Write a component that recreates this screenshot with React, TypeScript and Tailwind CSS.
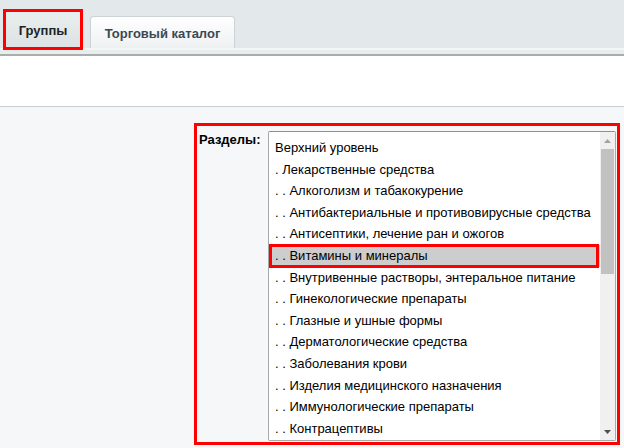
import React from 'react';

const sections = [
  'Верхний уровень',
  '. Лекарственные средства',
  '. . Алкоголизм и табакокурение',
  '. . Антибактериальные и противовирусные средства',
  '. . Антисептики, лечение ран и ожогов',
  '. . Витамины и минералы',
  '. . Внутривенные растворы, энтеральное питание',
  '. . Гинекологические препараты',
  '. . Глазные и ушные формы',
  '. . Дерматологические средства',
  '. . Заболевания крови',
  '. . Изделия медицинского назначения',
  '. . Иммунологические препараты',
  '. . Контрацептивы',
];

const SELECTED = 5;

const App: React.FC = () => {
  return (
    <div className="min-h-[448px] w-[624px] overflow-hidden bg-[#f5f7f8] font-['Liberation_Sans',Arial,sans-serif] text-[13px] text-black">
      {/* tabs */}
      <div className="flex h-[48px] items-start bg-[#e3e9ea] pl-[3px]">
        <div className="relative z-10 mt-[9px] flex h-[41px] w-[80px] items-center justify-center border-[3px] border-[#ff0000] bg-gradient-to-b from-[#e9eeee] to-[#dde3e4] pt-[2px] font-bold text-[#1c2326]">
          Группы
        </div>
        <div className="ml-[7px] mt-[16px] flex h-[32px] w-[145px] items-center justify-center rounded-t-[4px] border border-b-0 border-[#ccd3d4] bg-gradient-to-b from-white to-[#eef1f2] pt-[3px] font-bold text-[#3c4850]">
          Торговый каталог
        </div>
      </div>
      <div className="h-[8px] border-t-2 border-b-2 border-t-[#f4f6f6] border-b-[#a6aeae] bg-[#e7ecec]" />

      <div className="h-[51px] border-b border-[#c6cece] bg-white" />

      {/* form */}
      <div className="ml-[194px] mt-[16px] flex h-[322px] w-[426px] border-[3px] border-[#ff0000]">
        <div className="w-[71px] pl-[2px] pt-[6px] font-bold leading-[15px]">Разделы:</div>
        <div className="mt-[5px] flex h-[310px] w-[348px] overflow-hidden rounded-[2px] border border-[#a9a9a9] border-t-[#8f8f8f] bg-white">
          <ul className="flex-1 pt-[5px]">
            {sections.map((s, i) => (
              <li
                key={s}
                className={
                  i === SELECTED
                    ? 'relative h-[21.6px] whitespace-nowrap bg-[#cdcdcd] pl-[6px] leading-[21.6px]'
                    : 'h-[21.6px] whitespace-nowrap pl-[6px] leading-[21.6px]'
                }
              >
                {s}
                {i === SELECTED && (
                  <span className="absolute -top-[1px] -bottom-[1px] left-0 right-[1px] border-[3px] border-[#ff0000]" />
                )}
              </li>
            ))}
          </ul>
          {/* scrollbar */}
          <div className="flex w-[15px] flex-col bg-[#f0f0f0]">
            <div className="flex h-[17px] items-center justify-center">
              <svg width="7" height="4" viewBox="0 0 7 4"><path d="M3.5 0L7 4H0z" fill="#a3a3a3" /></svg>
            </div>
            <div className="mx-[1px] h-[125px] bg-[#c1c1c1]" />
            <div className="flex-1" />
            <div className="flex h-[17px] items-center justify-center">
              <svg width="7" height="4" viewBox="0 0 7 4"><path d="M0 0H7L3.5 4z" fill="#505050" /></svg>
            </div>
          </div>
        </div>
      </div>
    </div>
  );
};

export default App;
